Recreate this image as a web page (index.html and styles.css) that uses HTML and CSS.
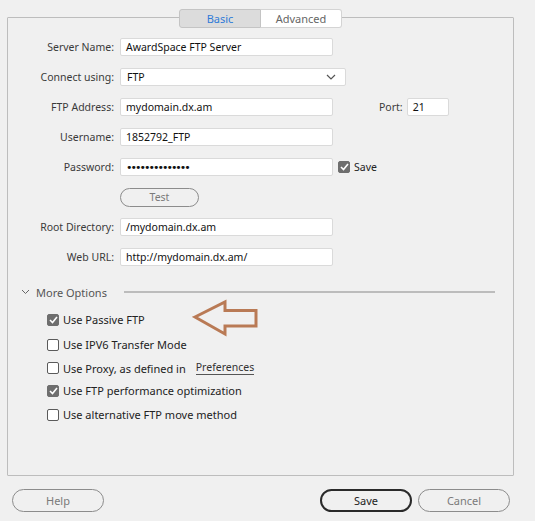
FILE: index.html
```html
<!DOCTYPE html>
<html>
<head>
<meta charset="utf-8">
<link rel="stylesheet" href="styles.css">
</head>
<body>
<div class="dialog">
  <div class="panel">
    <div class="tabs">
      <div class="tab active">Basic</div>
      <div class="tab">Advanced</div>
    </div>
    <div class="form">
      <div class="label">Server Name:</div>
      <div class="field"><div class="input">AwardSpace FTP Server</div></div>

      <div class="label">Connect using:</div>
      <div class="field"><div class="input select">FTP
        <svg class="chev" width="10" height="6" viewBox="0 0 10 6"><path d="M1 1 L5 5 L9 1" fill="none" stroke="#555" stroke-width="1.2"/></svg></div></div>

      <div class="label">FTP Address:</div>
      <div class="field"><div class="input">mydomain.dx.am</div>
        <span class="port-label">Port:</span><div class="input port">21</div></div>

      <div class="label">Username:</div>
      <div class="field"><div class="input">1852792_FTP</div></div>

      <div class="label">Password:</div>
      <div class="field"><div class="input pw">••••••••••••••</div>
        <span class="cb checked save-cb"><svg width="9" height="8" viewBox="0 0 9 8"><path d="M1 4 L3.5 6.5 L8 1" fill="none" stroke="#fff" stroke-width="1.6"/></svg></span><span class="cb-text">Save</span></div>

      <div class="label"></div>
      <div class="field"><div class="btn test">Test</div></div>

      <div class="label">Root Directory:</div>
      <div class="field"><div class="input">/mydomain.dx.am</div></div>

      <div class="label">Web URL:</div>
      <div class="field"><div class="input">http://mydomain.dx.am/</div></div>
    </div>

    <div class="more">
      <svg class="more-chev" width="9" height="6" viewBox="0 0 9 6"><path d="M1 1 L4.5 4.5 L8 1" fill="none" stroke="#666" stroke-width="1"/></svg>
      <span class="more-text">More Options</span>
      <span class="more-line"></span>
    </div>

    <div class="options">
      <div class="opt"><span class="cb checked"><svg width="9" height="8" viewBox="0 0 9 8"><path d="M1 4 L3.5 6.5 L8 1" fill="none" stroke="#fff" stroke-width="1.6"/></svg></span><span class="cb-text">Use Passive FTP</span></div>
      <div class="opt"><span class="cb"></span><span class="cb-text">Use IPV6 Transfer Mode</span></div>
      <div class="opt short"><span class="cb"></span><span class="cb-text">Use Proxy, as defined in</span><span class="link">Preferences</span></div>
      <div class="opt mid"><span class="cb checked"><svg width="9" height="8" viewBox="0 0 9 8"><path d="M1 4 L3.5 6.5 L8 1" fill="none" stroke="#fff" stroke-width="1.6"/></svg></span><span class="cb-text">Use FTP performance optimization</span></div>
      <div class="opt"><span class="cb"></span><span class="cb-text">Use alternative FTP move method</span></div>
    </div>

    <svg class="arrow" width="68" height="38" viewBox="0 0 68 38">
      <path d="M3 18 L33 3 L33 11.5 L64 11.5 L64 27 L33 27 L33 35 Z" fill="none" stroke="#b97a55" stroke-width="3" stroke-linejoin="miter"/>
    </svg>
  </div>

  <div class="footer">
    <div class="btn big">Help</div>
    <div class="spacer"></div>
    <div class="btn big primary">Save</div>
    <div class="btn big">Cancel</div>
  </div>
</div>
</body>
</html>
```
FILE: styles.css
```css
* { box-sizing: border-box; }
html, body { margin: 0; padding: 0; background: #f0f0f0; }
body {
  font-family: "Noto Sans", "Open Sans", sans-serif;
  font-size: 10.5px;
  color: #333;
  width: 535px;
  height: 521px;
  overflow: hidden;
}
.dialog { padding: 17px 0 0 7px; }
.panel {
  position: relative;
  width: 507px;
  height: 459px;
  border: 1px solid #bdbdbd;
  border-radius: 1px;
}
.tabs {
  display: flex;
  justify-content: center;
  margin-top: -9px;
  height: 19px;
}
.tab {
  width: 82px;
  height: 19px;
  display: flex;
  align-items: center;
  justify-content: center;
  background: #fff;
  border: 1px solid #d4d4d4;
  color: #666;
  font-size: 11px;
}
.tab:first-child { border-radius: 3px 0 0 3px; }
.tab:last-child { border-radius: 0 3px 3px 0; border-left: none; width: 81px; }
.tab.active { background: #dcdcdc; color: #2f7bd8; border-color: #c4c4c4; }

.form {
  display: grid;
  grid-template-columns: 106px 1fr;
  column-gap: 6px;
  row-gap: 12px;
  margin-top: 10px;
}
.label {
  height: 18px;
  display: flex;
  align-items: center;
  justify-content: flex-end;
  color: #3a3a3a;
}
.field { display: flex; align-items: center; height: 18px; }
.input {
  width: 213px;
  height: 18px;
  background: #fff;
  border: 1px solid #dadada;
  border-radius: 2px;
  padding: 0 5px;
  display: flex;
  align-items: center;
  color: #111;
  white-space: nowrap;
}
.input.select { width: 226px; justify-content: space-between; padding-left: 6px; }
.input.select .chev { margin-right: 4px; }
.port-label { margin-left: 46px; color: #3a3a3a; }
.input.port { width: 42px; margin-left: 4px; }
.input.pw { letter-spacing: -2px; font-size: 11px; font-family: "DejaVu Sans", sans-serif; padding-left: 5px; }
.cb {
  width: 12px;
  height: 12px;
  border: 1px solid #5a5a5a;
  border-radius: 2px;
  background: #fff;
  display: inline-flex;
  align-items: center;
  justify-content: center;
  flex: none;
}
.cb.checked { background: #6e6e6e; border-color: #6e6e6e; }
.save-cb { margin-left: 5px; }
.cb-text { margin-left: 4px; color: #222; }
.opt .cb-text { font-size: 11px; }
.btn {
  display: flex;
  align-items: center;
  justify-content: center;
  border: 1px solid #8c8c8c;
  border-radius: 10px;
  color: #7a7a7a;
}
.btn.test { width: 79px; height: 19px; }

.more {
  display: flex;
  align-items: center;
  margin-top: 18px;
  height: 16px;
}
.more-chev { margin-left: 13px; flex: none; }
.more-text { margin-left: 6px; width: 68px; flex: none; color: #555; font-size: 11px; white-space: nowrap; }
.more-line { margin-left: 20px; margin-right: 18px; flex: 1; height: 2px; background: #bcbcbc; }

.options { display: flex; flex-direction: column; margin-top: 7px; margin-left: 39px; }
.opt { display: flex; align-items: center; height: 25px; }
.opt.short { height: 22px; }
.opt.mid { height: 23px; }
.link {
  margin-left: 10px;
  font-size: 10.5px;
  color: #333;
  border-bottom: 1px solid #555;
  line-height: 13px;
}
.arrow { position: absolute; left: 184px; top: 281px; }

.footer {
  display: flex;
  align-items: center;
  margin-top: 13px;
  padding-left: 5px;
  width: 503px;
}
.spacer { flex: 1; }
.btn.big { width: 92px; height: 23px; border-radius: 12px; font-size: 11px; }
.btn.big + .btn.big { margin-left: 6px; }
.btn.primary { border: 2px solid #2a2a2a; color: #222; }
```
